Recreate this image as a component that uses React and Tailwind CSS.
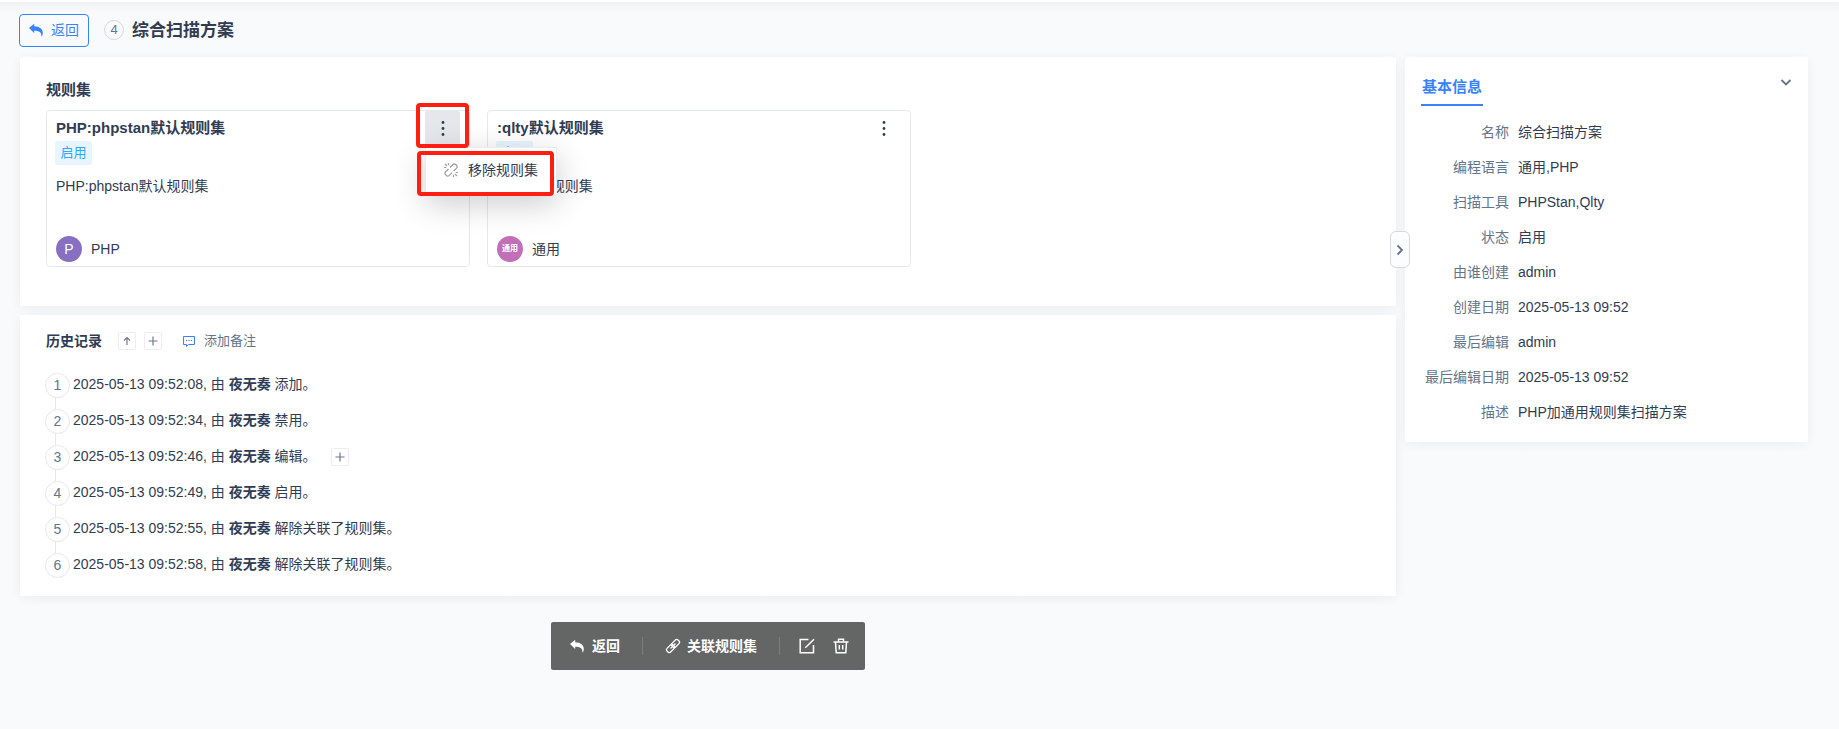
import { useState } from "react";

const basicInfo = [
  { label: "名称", value: "综合扫描方案" },
  { label: "编程语言", value: "通用,PHP" },
  { label: "扫描工具", value: "PHPStan,Qlty" },
  { label: "状态", value: "启用" },
  { label: "由谁创建", value: "admin" },
  { label: "创建日期", value: "2025-05-13 09:52" },
  { label: "最后编辑", value: "admin" },
  { label: "最后编辑日期", value: "2025-05-13 09:52" },
  { label: "描述", value: "PHP加通用规则集扫描方案" },
];

const historyData = [
  { time: "2025-05-13 09:52:08", user: "夜无奏", action: "添加。" },
  { time: "2025-05-13 09:52:34", user: "夜无奏", action: "禁用。" },
  { time: "2025-05-13 09:52:46", user: "夜无奏", action: "编辑。", hasDetail: true },
  { time: "2025-05-13 09:52:49", user: "夜无奏", action: "启用。" },
  { time: "2025-05-13 09:52:55", user: "夜无奏", action: "解除关联了规则集。" },
  { time: "2025-05-13 09:52:58", user: "夜无奏", action: "解除关联了规则集。" },
];

const ReplyIcon = () => (
  <svg viewBox="0 0 14 14" fill="currentColor" className="h-3.5 w-3.5">
    <path d="M0 5 5.2.8v2.5c5.6.1 8.6 2.9 8.6 6.7 0 1.2-.3 2.3-.8 3.2h-.6c.3-3.7-2.2-5.3-7.2-5.4v2.2z" />
  </svg>
);

const LinkIcon = () => (
  <svg viewBox="0 0 16 16" fill="none" stroke="currentColor" strokeWidth="1.3" className="h-4 w-4">
    <rect x="-4.2" y="-2.5" width="8.4" height="5" rx="1.5" transform="translate(10.5 5.5) rotate(-45)" />
    <rect x="-4.2" y="-2.5" width="8.4" height="5" rx="1.5" transform="translate(5.5 10.5) rotate(-45)" />
    <path d="m5.500 10.500 5-5" />
  </svg>
);

const UnlinkIcon = () => (
  <svg viewBox="0 0 16 16" fill="none" stroke="currentColor" strokeWidth="1.2" className="h-4 w-4 text-[#9a9ea8]">
    <path d="m7 5.500 3-3a1.800 1.800 0 0 1 2.600 0l1 1a1.800 1.800 0 0 1 0 2.600l-3 3" />
    <path d="m5.500 7-3 3a1.800 1.800 0 0 0 0 2.600l1 1a1.800 1.800 0 0 0 2.600 0l3-3" />
    <path d="M5.500 1v2.200M2 2l2 2M1 5.500h2.200M10.500 12.800V15M12 12l2 2M12.800 10.500H15" />
  </svg>
);

const EditIcon = () => (
  <svg viewBox="0 0 16 16" fill="none" stroke="currentColor" strokeWidth="1.5" className="h-4 w-4">
    <path d="M9.500 1.500H1.200v13.300h13.300V7M6.300 9.700l8.700-8.500" />
  </svg>
);

const TrashIcon = () => (
  <svg viewBox="0 0 16 16" fill="none" stroke="currentColor" strokeWidth="1.5" className="h-4 w-4">
    <path d="M.5 4h15M5.500 3.500V1.200h5v2.300M2.500 4l.7 10.800h9.600L13.500 4M6.300 7v4.500M9.700 7v4.500" />
  </svg>
);

const DotsIcon = () => (
  <svg viewBox="0 0 4 16" fill="currentColor" className="h-4 w-1">
    <circle cx="2" cy="2.5" r="1.4" />
    <circle cx="2" cy="8.5" r="1.4" />
    <circle cx="2" cy="14.5" r="1.4" />
  </svg>
);

const CommentIcon = () => (
  <svg viewBox="0 0 12 12" fill="none" stroke="currentColor" className="h-3 w-3 text-[#3f7dfa]">
    <path d="M.5 1.500h11v8H5.500L3.500 11.500v-2h-3z" />
    <path d="M3 5.500h1.300M5.400 5.500h1.300M7.800 5.500h1.300" />
  </svg>
);

const SquareButton = ({ label, d, className }) => (
  <button
    type="button"
    aria-label={label}
    className={`flex h-[18px] w-[18px] items-center justify-center rounded-xs border border-[#edeef2] text-[#6f7a90] ${className}`}
  >
    <svg viewBox="0 0 10 10" fill="none" stroke="currentColor" strokeWidth="1.2" className="h-2.5 w-2.5">
      <path d={d} />
    </svg>
  </button>
);

const RulesetCard = ({ title, desc, lang, avatar, menuOpen, onMenu }) => (
  <div className="relative rounded border border-[#e6e8f0] bg-white px-[9px] pb-1">
    <div className="flex h-[34px] items-center justify-between">
      <h3 className="text-[15px] font-bold">{title}</h3>
      <button
        type="button"
        aria-label="更多操作"
        onClick={onMenu}
        className={`flex h-[35px] w-[35px] items-center justify-center rounded-xs ${menuOpen ? "bg-[#e6e7ea]" : ""}`}
      >
        <DotsIcon />
      </button>
    </div>
    <span className="-ml-px -mt-1 flex h-6 w-[37px] items-center justify-center rounded-xs bg-[#e8f5ff] text-[13px] text-[#2da8ff]">
      启用
    </span>
    <p className="mt-[11px] leading-5">{desc}</p>
    <div className="mt-10 flex items-center gap-[9px]">
      {avatar}
      <span>{lang}</span>
    </div>
    {menuOpen && (
      <>
        {/* Dropdown menu */}
        <div className="absolute right-[-88px] top-9 z-10 h-[49px] w-[132px] border border-[#ebecef] bg-white shadow-[0_8px_32px_rgba(0,0,0,0.2)]">
          <button type="button" className="flex h-10 w-full items-center gap-[9px] pl-[17px] pt-1">
            <UnlinkIcon />
            移除规则集
          </button>
        </div>
        {/* Highlight frames */}
        <div className="pointer-events-none absolute -top-2 right-0 z-20 h-[45px] w-[53px] rounded-sm border-4 border-[#ff1f12]" />
        <div className="pointer-events-none absolute right-[-85px] top-10 z-20 h-[45px] w-[137px] rounded-sm border-4 border-[#ff1f12]" />
      </>
    )}
  </div>
);

const App = () => {
  const [menuOpen, setMenuOpen] = useState(true);
  const [infoOpen, setInfoOpen] = useState(true);
  const [sideOpen, setSideOpen] = useState(true);

  return (
    <div className="min-h-screen border-t-2 border-white bg-[#f8fafc] font-['Liberation_Sans','Noto_Sans_CJK_SC',sans-serif] text-sm text-[#313c52]">
      <div className="bg-linear-to-b from-[#eff1f3] to-[#f8fafc] to-[10px] pl-[19px] pr-[31px]">
        {/* Header */}
        <header className="flex h-[55px] items-center pt-px">
          <button
            type="button"
            className="flex h-[33px] w-[70px] items-center justify-center gap-2 rounded-sm border border-[#3883fa] text-[#3883fa]"
          >
            <ReplyIcon />
            返回
          </button>
          <span className="ml-[15px] flex h-5 w-5 items-center justify-center rounded-full border border-[#d5d9e6] text-[13px] text-[#64758b]">
            4
          </span>
          <h1 className="ml-2 pt-0.5 text-[17px] font-bold">综合扫描方案</h1>
        </header>

        <div className="flex items-start gap-[9px] pl-px">
          <main className="min-w-0 flex-1">
            {/* Rulesets */}
            <section className="rounded-xs bg-white pb-[39px] pl-[26px] pr-11 pt-[21px] shadow-[0_2px_12px_rgba(0,0,0,0.06)]">
              <h2 className="text-[15px] font-bold leading-6">规则集</h2>
              <div className="mt-2 grid grid-cols-3 gap-[17px]">
                <RulesetCard
                  title="PHP:phpstan默认规则集"
                  desc="PHP:phpstan默认规则集"
                  lang="PHP"
                  avatar={
                    <span className="flex h-[26px] w-[26px] items-center justify-center rounded-full bg-[#876fc1] text-white">P</span>
                  }
                  menuOpen={menuOpen}
                  onMenu={() => setMenuOpen(!menuOpen)}
                />
                <RulesetCard
                  title=":qlty默认规则集"
                  desc=":qlty默认规则集"
                  lang="通用"
                  avatar={
                    <span className="flex h-[26px] w-[26px] items-center justify-center rounded-full bg-[#c16fb8] text-[8px] font-bold text-white">通用</span>
                  }
                />
              </div>
            </section>

            {/* History */}
            <section className="mt-[9px] rounded-xs bg-white px-[26px] pb-[13px] pt-4 shadow-[0_2px_12px_rgba(0,0,0,0.06)]">
              <div className="flex h-5 items-center">
                <h2 className="font-bold">历史记录</h2>
                <SquareButton label="排序" d="M5 9V1.500M2 4.500l3-3 3 3" className="ml-4" />
                <SquareButton label="全部展开" d="M5 .5v9M.5 5h9" className="ml-2" />
                <button type="button" className="ml-[21px] flex items-center gap-[9px] text-[13px] text-[#64758b]">
                  <CommentIcon />
                  添加备注
                </button>
              </div>
              <ol className="-ml-px mt-4">
                {historyData.map((item, index) => (
                  <li key={item.time} className="relative flex h-9 items-center">
                    {index < historyData.length - 1 && (
                      <span className="absolute left-2.5 top-[30px] h-3 w-px bg-[#e6e8f0]" />
                    )}
                    <span className="flex h-[25px] w-[25px] items-center justify-center rounded-full border border-[#e6e8f0] text-[#64758b]">
                      {index + 1}
                    </span>
                    <p className="ml-[3px] pb-0.5">
                      {item.time}, 由 <strong>{item.user}</strong> {item.action}
                    </p>
                    {item.hasDetail && <SquareButton label="展开" d="M5 .5v9M.5 5h9" className="ml-3.5" />}
                  </li>
                ))}
              </ol>
            </section>

            {/* Floating toolbar */}
            <div className="mx-auto mt-[26px] flex h-12 w-[314px] items-center rounded-xs bg-[#646665] pl-[19px] pr-4 text-white">
              <button type="button" className="flex items-center gap-2 font-bold">
                <ReplyIcon />
                返回
              </button>
              <span className="ml-[22px] h-[18px] w-px bg-[#7c7e7d]" />
              <button type="button" className="ml-[22px] flex items-center gap-1.5 font-bold">
                <LinkIcon />
                关联规则集
              </button>
              <span className="ml-[22px] h-[18px] w-px bg-[#7c7e7d]" />
              <button type="button" aria-label="编辑" className="ml-[19px]">
                <EditIcon />
              </button>
              <button type="button" aria-label="删除" className="ml-auto">
                <TrashIcon />
              </button>
            </div>
          </main>

          {/* Basic info */}
          <aside
            className={`relative min-h-[240px] rounded-xs bg-white pb-[13px] shadow-[0_2px_12px_rgba(0,0,0,0.06)] ${sideOpen ? "w-[403px]" : "w-1"}`}
          >
            <button
              type="button"
              aria-label="收起侧栏"
              onClick={() => setSideOpen(!sideOpen)}
              className="absolute left-[-15px] top-[174px] flex h-[37px] w-5 items-center justify-center rounded-md border border-[#d5d9e6] bg-[#fcfdfe] text-[#64758b]"
            >
              <svg viewBox="0 0 8 12" fill="none" stroke="currentColor" strokeWidth="1.8" className="h-3 w-2">
                <path d="m1.500 1.500 4.500 4.500-4.500 4.500" />
              </svg>
            </button>
            {sideOpen && (
              <>
                <div className="flex items-start justify-between px-4 pt-3.5">
                  <h2 className="flex h-[35px] items-center border-b-2 border-[#3883fa] px-px pb-0.5 text-[15px] font-bold text-[#3883fa]">
                    基本信息
                  </h2>
                  <button
                    type="button"
                    aria-label="折叠"
                    onClick={() => setInfoOpen(!infoOpen)}
                    className="mt-[5px] text-[#64758b]"
                  >
                    <svg viewBox="0 0 12 12" fill="none" stroke="currentColor" strokeWidth="1.8" className="h-3 w-3">
                      <path d="m1.500 4 4.500 4.500L10.500 4" />
                    </svg>
                  </button>
                </div>
                {infoOpen && (
                  <dl className="mt-2">
                    {basicInfo.map((item) => (
                      <div key={item.label} className="flex h-[35px] items-center gap-[9px]">
                        <dt className="w-[104px] text-right text-[#64758b]">{item.label}</dt>
                        <dd>{item.value}</dd>
                      </div>
                    ))}
                  </dl>
                )}
              </>
            )}
          </aside>
        </div>
      </div>
    </div>
  );
};

export default App;
